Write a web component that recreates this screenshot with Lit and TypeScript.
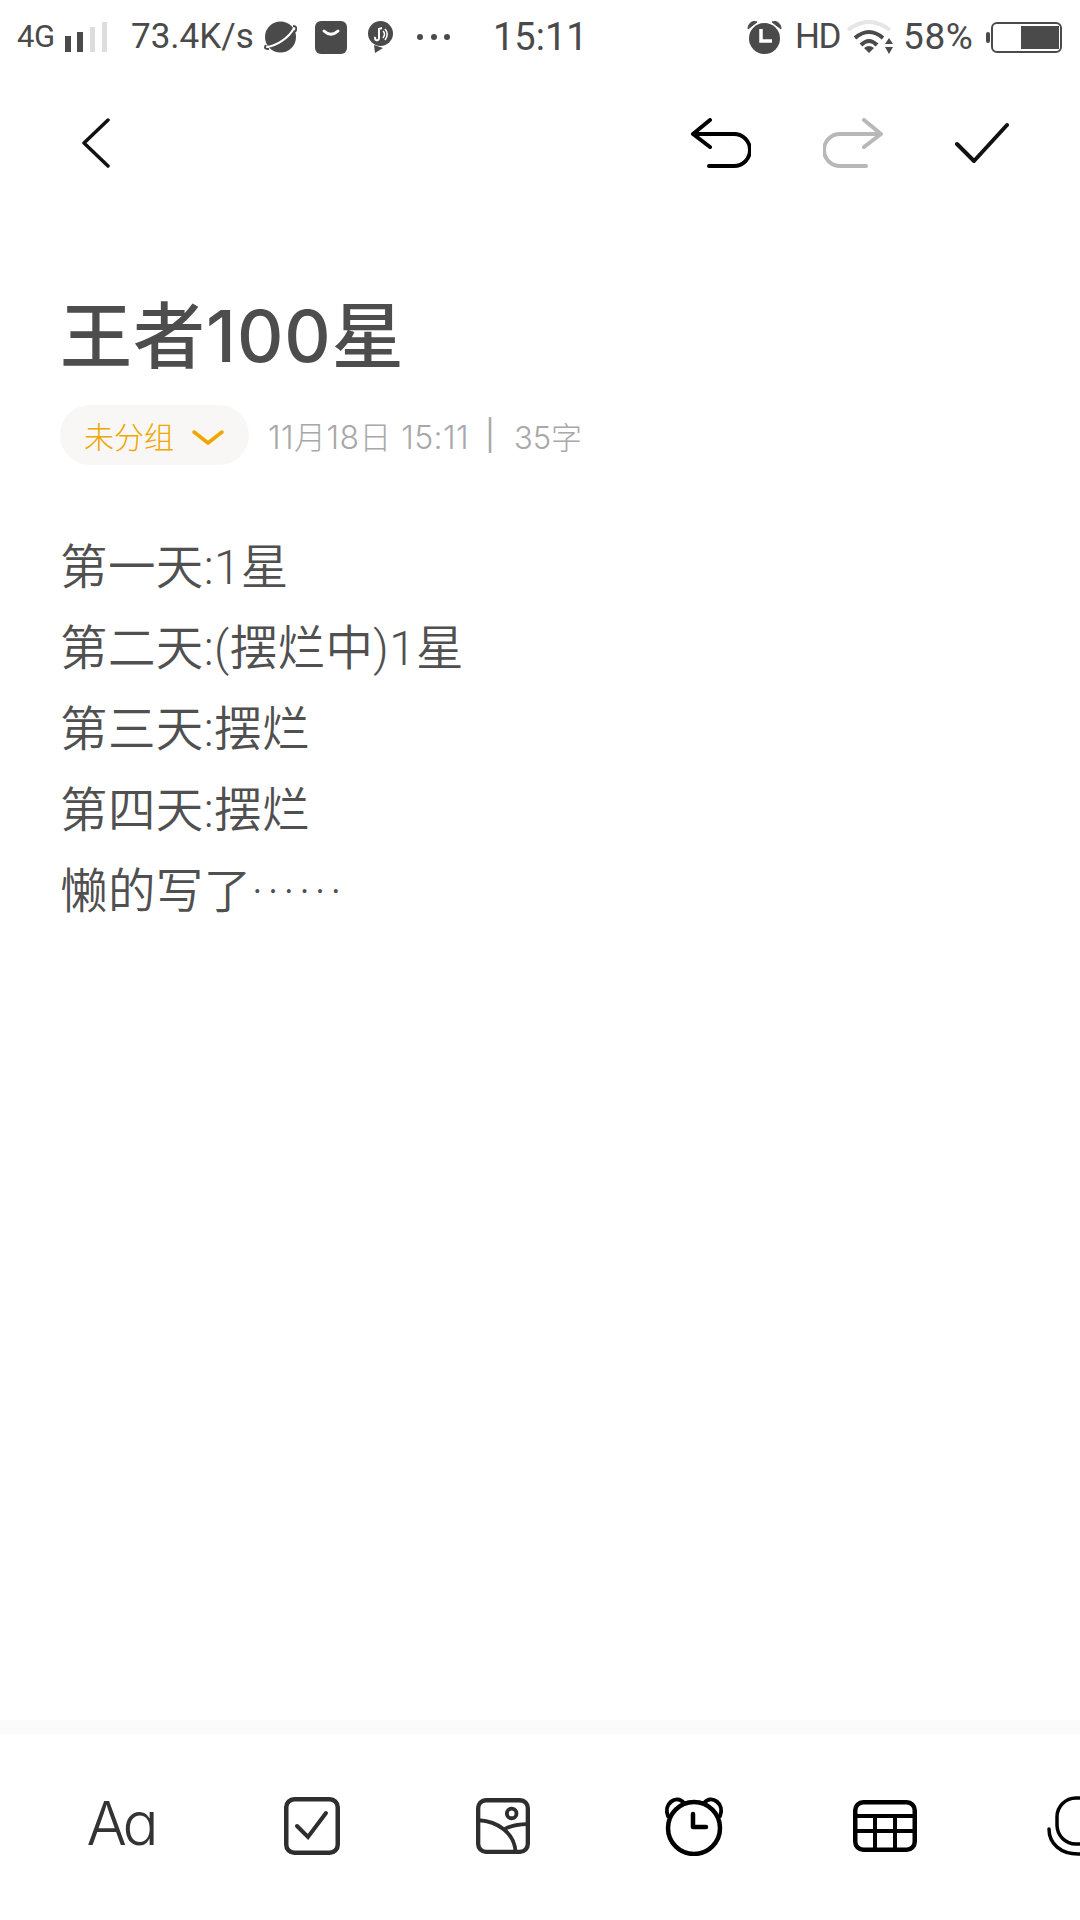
import { LitElement, html, css } from "lit";
import { customElement } from "lit/decorators.js";

@customElement("app-root")
export class AppRoot extends LitElement {
  static styles = css`
    :host {
      display: flex;
      flex-direction: column;
      width: 1080px;
      height: 1920px;
      background: #fff;
      overflow: hidden;
      font-family: Roboto, "Noto Sans CJK SC", sans-serif;
    }
    svg { display: block; flex: none; }
    .status {
      display: flex;
      align-items: center;
      justify-content: space-between;
      height: 74px;
      padding: 0 18px 0 17px;
      color: #4a4a4a;
      font-size: 35px;
      line-height: 74px;
      flex: none;
    }
    .group { display: flex; align-items: center; }
    .s4g { font-size: 31px; letter-spacing: -0.5px; width: 38px; white-space: nowrap; }
    .signal { margin-left: 10px; }
    .speed { margin-left: 24px; width: 124px; white-space: nowrap; }
    .planet { margin-left: 9px; }
    .bag { margin-left: 18px; }
    .music { margin-left: 21px; }
    .dots { margin-left: 23px; }
    .time { font-size: 38px; position: absolute; left: 493px; }
    .hd { margin-left: 13px; width: 44px; letter-spacing: -1.5px; white-space: nowrap; }
    .wifi { margin-left: 8px; }
    .pct { margin-left: 10px; width: 72px; white-space: nowrap; font-size: 37px; letter-spacing: 0.6px; }
    .batt { margin-left: 11px; }
    .nav {
      display: flex;
      align-items: center;
      justify-content: space-between;
      height: 138px;
      padding: 0 71px 0 82px;
      flex: none;
    }
    .actions { display: flex; align-items: center; gap: 72px; }
    .main { flex: 1; padding: 79px 0 0 60px; min-height: 0; }
    .title {
      font-family: Inter, "Noto Sans CJK SC", sans-serif;
      font-size: 72px;
      font-weight: 500;
      line-height: 90px;
      color: #4d4d4d;
      letter-spacing: 1px;
    }
    .meta {
      display: flex;
      align-items: center;
      margin-top: 24px;
      font-family: Inter, "Noto Sans CJK SC", sans-serif;
      font-size: 32px;
      font-weight: 300;
      color: #a8a8a8;
    }
    .pill {
      display: flex;
      align-items: center;
      gap: 18px;
      height: 60px;
      width: 189px;
      box-sizing: border-box;
      padding-left: 24px;
      border-radius: 30px;
      background: #f8f7f5;
      color: #f0a500;
      font-size: 30px;
      margin-right: 19px;
      flex: none;
    }
    .chev { margin-top: 5px; }
    .date { letter-spacing: 0.4px; }
    .sep { margin: 0 19px 0 16px; font-weight: 400; font-size: 30px; }
    .count { font-size: 31px; }
    .body {
      margin-top: 63px;
      font-family: Roboto, "Noto Sans CJK SC", sans-serif;
      font-size: 47.500px;
      letter-spacing: 0.4px;
      line-height: 81px;
      color: #505050;
      font-weight: 350;
    }
    .ellipsis { letter-spacing: 4px; }
    .band { height: 14px; background: #fbfbfb; flex: none; }
    .tools {
      display: flex;
      align-items: center;
      height: 184px;
      padding: 0 0 2px 25px;
      flex: none;
    }
    .cell { flex: 0 0 191px; display: flex; justify-content: center; align-items: center; }
    .aa {
      font-family: Inter, sans-serif;
      font-feature-settings: "cv11";
      font-weight: 300;
      font-size: 60px;
      letter-spacing: -4px;
      color: #333;
      line-height: 70px;
      margin-top: -6px;
    }
    .mic { margin-left: 4px; }
  `;

  render() {
    const dark = "#4a4a4a";
    return html`
      <div class="status">
        <div class="group">
          <span class="s4g">4G</span>
          <svg class="signal" width="42" height="30" viewBox="0 0 42 30">
            <rect x="0" y="14" width="6" height="16" fill="${dark}"></rect>
            <rect x="12" y="10" width="6" height="20" fill="${dark}"></rect>
            <rect x="25" y="5" width="5" height="25" fill="#ddd"></rect>
            <rect x="37" y="0" width="5" height="30" fill="#ddd"></rect>
          </svg>
          <span class="speed">73.4K/s</span>
          <svg class="planet" width="33" height="34" viewBox="0 0 33 34">
            <circle cx="16.5" cy="17" r="15.5" fill="${dark}"></circle>
            <path d="M3 27C12 26 25 18 30 8" fill="none" stroke="#fff" stroke-width="2"></path>
            <path d="M29 6C33 6 33 9 31 12M2 25C0 28 1 29 5 29" fill="none" stroke="${dark}" stroke-width="2"></path>
          </svg>
          <svg class="bag" width="32" height="33" viewBox="0 0 32 33">
            <rect width="32" height="33" rx="6" fill="${dark}"></rect>
            <path d="M9 10Q16 16.500 23 10" fill="none" stroke="#fff" stroke-width="3" stroke-linecap="round"></path>
          </svg>
          <svg class="music" width="25" height="32" viewBox="0 0 25 32">
            <circle cx="12.5" cy="12.5" r="12.5" fill="${dark}"></circle>
            <path d="M6 24L7 32L15 27Z" fill="${dark}"></path>
            <path d="M7.5 16a2 2 0 1 0 3.5 1V8L14 7" fill="none" stroke="#fff" stroke-width="2"></path>
            <path d="M15 10Q18 13 15 17M17 8Q21.500 13 17 19" fill="none" stroke="#fff" stroke-width="1.500"></path>
          </svg>
          <svg class="dots" width="34" height="8" viewBox="0 0 34 8">
            <circle cx="4" cy="4" r="3" fill="${dark}"></circle>
            <circle cx="18" cy="4" r="3" fill="${dark}"></circle>
            <circle cx="31" cy="4" r="3" fill="${dark}"></circle>
          </svg>
        </div>
        <span class="time">15:11</span>
        <div class="group">
          <svg width="35" height="34" viewBox="0 0 35 34">
            <circle cx="17.500" cy="18.500" r="15.500" fill="${dark}"></circle>
            <path d="M1 9C1 3 6 0 10 2ZM34 9C34 3 29 0 25 2Z" fill="${dark}" stroke="${dark}" stroke-width="1"></path>
            <path d="M14 9V21H25" fill="none" stroke="#fff" stroke-width="3.500"></path>
          </svg>
          <span class="hd">HD</span>
          <svg class="wifi" width="46" height="34" viewBox="0 0 46 34">
            <path d="M1 10Q22 -6 43 10" fill="none" stroke="#e6e6e6" stroke-width="4"></path>
            <path d="M8 18Q22 6 36 18" fill="none" stroke="${dark}" stroke-width="4"></path>
            <path d="M14 25Q22 17 30 25" fill="none" stroke="${dark}" stroke-width="4"></path>
            <path d="M17 28Q22 24 27 28L22 33Z" fill="${dark}"></path>
            <path d="M42 18L46 24H38ZM42 34L46 27H38Z" fill="${dark}"></path>
          </svg>
          <span class="pct">58%</span>
          <svg class="batt" width="76" height="32" viewBox="0 0 76 32">
            <rect x="0" y="11" width="4" height="11" rx="2" fill="${dark}"></rect>
            <rect x="6" y="2" width="69" height="29" rx="5" fill="none" stroke="${dark}" stroke-width="2"></rect>
            <rect x="35" y="5" width="38" height="23" fill="${dark}"></rect>
          </svg>
        </div>
      </div>

      <div class="nav">
        <svg width="28" height="50" viewBox="0 0 28 50">
          <path d="M26 2L2 25L26 48" fill="none" stroke="#111" stroke-width="3.500" stroke-linecap="round" stroke-linejoin="round"></path>
        </svg>
        <div class="actions">
          <svg width="60" height="50" viewBox="0 0 60 50">
            <path d="M19 2L2 16L19 29M2 16H43A16 16 0 0 1 43 48H18" fill="none" stroke="#000" stroke-width="4" stroke-linecap="round" stroke-linejoin="round"></path>
          </svg>
          <svg width="60" height="50" viewBox="0 0 60 50">
            <path d="M41 2L58 16L41 29M58 16H17A16 16 0 0 0 17 48H43" fill="none" stroke="#b8b8b8" stroke-width="4" stroke-linecap="round" stroke-linejoin="round"></path>
          </svg>
          <svg width="54" height="42" viewBox="0 0 54 42">
            <path d="M2 22L19 39L52 3" fill="none" stroke="#111" stroke-width="4" stroke-linecap="round" stroke-linejoin="round"></path>
          </svg>
        </div>
      </div>

      <div class="main">
        <div class="title">王者100星</div>
        <div class="meta">
          <div class="pill">
            <span>未分组</span>
            <svg class="chev" width="32" height="16" viewBox="0 0 32 16">
              <path d="M2 2L16 13L30 2" fill="none" stroke="#f0a500" stroke-width="3.500" stroke-linecap="round" stroke-linejoin="round"></path>
            </svg>
          </div>
          <span class="date">11月18日 15:11</span><span class="sep">|</span><span class="count">35字</span>
        </div>
        <div class="body">
          <div>第一天:1星</div>
          <div>第二天:(摆烂中)1星</div>
          <div>第三天:摆烂</div>
          <div>第四天:摆烂</div>
          <div>懒的写了<span class="ellipsis">······</span></div>
        </div>
      </div>

      <div class="band"></div>
      <div class="tools">
        <div class="cell"><span class="aa">Aa</span></div>
        <div class="cell">
          <svg width="56" height="58" viewBox="0 0 56 58">
            <rect x="2.250" y="2.250" width="51.500" height="53.500" rx="8" fill="none" stroke="#2e2e2e" stroke-width="4.500"></rect>
            <path d="M13 29L24 40L42 16" fill="none" stroke="#2e2e2e" stroke-width="4" stroke-linecap="round"></path>
          </svg>
        </div>
        <div class="cell">
          <svg width="54" height="58" viewBox="0 0 56 58">
            <rect x="2.250" y="2.250" width="51.500" height="53.500" rx="8" fill="none" stroke="#2e2e2e" stroke-width="4.500"></rect>
            <path d="M3 23C22 24 40 36 41 56M30 32Q40 27 53 27" fill="none" stroke="#2e2e2e" stroke-width="4"></path>
            <circle cx="37" cy="16" r="5" fill="none" stroke="#2e2e2e" stroke-width="4"></circle>
          </svg>
        </div>
        <div class="cell">
          <svg width="60" height="60" viewBox="0 0 60 60">
            <circle cx="30" cy="32" r="26" fill="none" stroke="#000" stroke-width="4.500"></circle>
            <path d="M4 20C-1 8 12 -2 20 7M56 20C61 8 48 -2 40 7" fill="none" stroke="#000" stroke-width="4" stroke-linecap="round"></path>
            <path d="M29 18V31H42" fill="none" stroke="#000" stroke-width="4.500" stroke-linecap="round" stroke-linejoin="round"></path>
          </svg>
        </div>
        <div class="cell">
          <svg width="64" height="52" viewBox="0 0 64 52">
            <rect x="2.250" y="2.250" width="59.500" height="47.500" rx="8" fill="none" stroke="#000" stroke-width="4.500"></rect>
            <path d="M2 16H62M2 31H62M22 16V50M42 16V50" fill="none" stroke="#000" stroke-width="4"></path>
          </svg>
        </div>
        <div class="cell">
          <svg class="mic" width="66" height="60" viewBox="0 0 66 60">
            <rect x="12" y="2" width="50" height="46" rx="19" fill="none" stroke="#000" stroke-width="3.500"></rect>
            <path d="M4 33C4 48 16 58 33 58H66" fill="none" stroke="#000" stroke-width="3.500" stroke-linecap="round"></path>
          </svg>
        </div>
      </div>
    `;
  }
}
